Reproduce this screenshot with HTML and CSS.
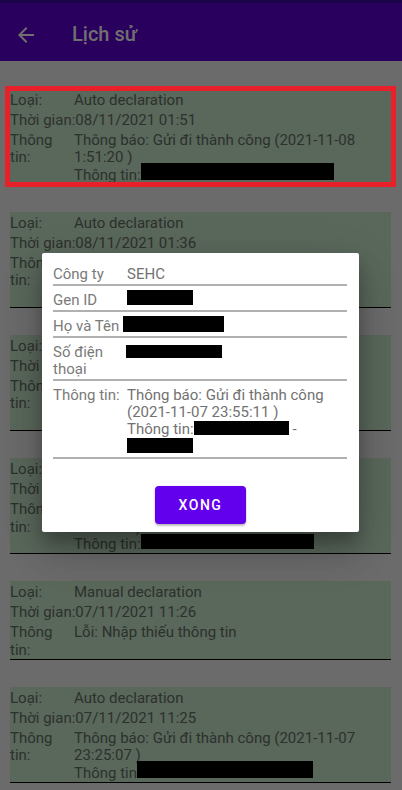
FILE: index.html
```html
<!DOCTYPE html>
<html lang="vi">
<head>
<meta charset="utf-8">
<title>Lịch sử</title>
<link rel="stylesheet" href="styles.css">
</head>
<body>
<header class="appbar">
  <div class="statusbar"></div>
  <div class="toolbar">
    <svg class="back" viewBox="0 0 24 24" width="24" height="24" aria-hidden="true">
      <path d="M20 11H7.83l5.59-5.59L12 4l-8 8 8 8 1.41-1.41L7.83 13H20v-2z" fill="currentColor"/>
    </svg>
    <h1 class="title">Lịch sử</h1>
  </div>
</header>

<main class="list">
  <section class="card">
    <div class="row"><span class="lbl">Loại:</span><span class="val">Auto declaration</span></div>
    <div class="row"><span class="lbl">Thời gian:</span><span class="val">08/11/2021 01:51</span></div>
    <div class="row"><span class="lbl wrap">Thông tin:</span><span class="val">Thông báo: Gửi đi thành công (2021-11-08<br>1:51:20 )<br>Thông tin:<span class="redact r-c1"></span></span></div>
    <div class="mark"></div>
  </section>

  <section class="card">
    <div class="row"><span class="lbl">Loại:</span><span class="val">Auto declaration</span></div>
    <div class="row"><span class="lbl">Thời gian:</span><span class="val">08/11/2021 01:36</span></div>
    <div class="row"><span class="lbl wrap">Thông tin:</span><span class="val">Thông báo: Gửi đi thành công (2021-11-08<br>1:36:40 )<br>Thông tin:<span class="redact r-c1"></span></span></div>
  </section>

  <section class="card">
    <div class="row"><span class="lbl">Loại:</span><span class="val">Auto declaration</span></div>
    <div class="row"><span class="lbl">Thời gian:</span><span class="val">08/11/2021 00:12</span></div>
    <div class="row"><span class="lbl wrap">Thông tin:</span><span class="val">Thông báo: Gửi đi thành công (2021-11-08<br>0:12:05 )<br>Thông tin:<span class="redact r-c1"></span></span></div>
  </section>

  <section class="card">
    <div class="row"><span class="lbl">Loại:</span><span class="val">Auto declaration</span></div>
    <div class="row"><span class="lbl">Thời gian:</span><span class="val">07/11/2021 23:55</span></div>
    <div class="row"><span class="lbl wrap">Thông tin:</span><span class="val">Thông báo: Gửi đi thành công (2021-11-07<br>23:55:11 )<br>Thông tin:<span class="redact r-c4"></span></span></div>
  </section>

  <section class="card">
    <div class="row"><span class="lbl">Loại:</span><span class="val">Manual declaration</span></div>
    <div class="row"><span class="lbl">Thời gian:</span><span class="val">07/11/2021 11:26</span></div>
    <div class="row"><span class="lbl wrap">Thông tin:</span><span class="val">Lỗi: Nhập thiếu thông tin</span></div>
  </section>

  <section class="card">
    <div class="row"><span class="lbl">Loại:</span><span class="val">Auto declaration</span></div>
    <div class="row"><span class="lbl">Thời gian:</span><span class="val">07/11/2021 11:25</span></div>
    <div class="row"><span class="lbl wrap">Thông tin:</span><span class="val">Thông báo: Gửi đi thành công (2021-11-07<br>23:25:07 )<br>Thông tin<span class="redact r-c6"></span></span></div>
  </section>
</main>

<div class="dialog" role="dialog">
  <div class="drow"><span class="dlbl">Công ty</span><span class="dval">SEHC</span></div>
  <div class="drow"><span class="dlbl">Gen ID</span><span class="dval"><span class="redact r-gen"></span></span></div>
  <div class="drow"><span class="dlbl">Họ và Tên</span><span class="dval"><span class="redact r-name"></span></span></div>
  <div class="drow"><span class="dlbl">Số điện thoại</span><span class="dval"><span class="redact r-phone"></span></span></div>
  <div class="drow"><span class="dlbl">Thông tin:</span><span class="dval">Thông báo: Gửi đi thành công<br>(2021-11-07 23:55:11 )<br>Thông tin:<span class="redact r-info1"></span> -<br><span class="redact r-info2"></span></span></div>
  <div class="actions"><button class="btn" type="button">XONG</button></div>
</div>
</body>
</html>
```

FILE: styles.css
```css
html, body {
  margin: 0;
  padding: 0;
}

body {
  width: 402px;
  height: 790px;
  overflow: hidden;
  background: #6b6b6b;
  font-family: Roboto, "Noto Sans", "Liberation Sans", sans-serif;
  color: #2c312c;
}

.appbar {
  display: flex;
  flex-direction: column;
}

.statusbar {
  height: 3px;
  background: #1b0548;
}

.toolbar {
  height: 58px;
  background: #2a005e;
  display: flex;
  align-items: center;
  color: #6f6f6f;
}

.back {
  margin-left: 14px;
  margin-top: 5px;
  flex: 0 0 24px;
}

.title {
  margin: 0 0 0 34px;
  font-size: 20px;
  font-weight: 500;
  line-height: 24px;
  padding-top: 4px;
  color: #707070;
}

.list {
  padding: 1px 11px 0 10px;
  display: flex;
  flex-direction: column;
}

.card {
  position: relative;
  margin-top: 27px;
  background: #5a675b;
  border-bottom: 1px solid #000;
  font-size: 15px;
  line-height: 17.4px;
}

.row {
  display: flex;
  padding-top: 2.7px;
}

.lbl {
  flex: 0 0 64px;
  white-space: nowrap;
}

.lbl.wrap {
  white-space: normal;
}

.val {
  flex: 1 1 auto;
  white-space: nowrap;
}

.redact {
  display: inline-block;
  background: #000;
  vertical-align: baseline;
}

.r-c1 { width: 193px; height: 16.7px; margin-top: -4px; }
.r-c4 { width: 173px; height: 15px; margin-top: -2px; }
.r-c6 { width: 176px; height: 17px; margin-top: -4px; }

.mark {
  position: absolute;
  top: -3px;
  bottom: -3px;
  left: -5px;
  right: -5px;
  border: 5px solid #e8202a;
}

/* dialog */
.dialog {
  position: absolute;
  top: 253px;
  left: 42px;
  width: 317px;
  box-sizing: border-box;
  padding: 7px 12px 8px 11px;
  background: #fff;
  border-radius: 2px;
  box-shadow: 0 11px 15px rgba(0, 0, 0, 0.2), 0 9px 46px rgba(0, 0, 0, 0.12), 0 24px 38px rgba(0, 0, 0, 0.14);
  font-size: 15px;
  line-height: 17px;
  color: #777;
}

.drow {
  display: flex;
  padding: 6px 0 1px;
  border-bottom: 2px solid #b0b0b0;
}

.dlbl {
  flex: 0 0 74px;
  color: #7a7a7a;
}

.dval {
  flex: 1 1 auto;
  white-space: nowrap;
  color: #727272;
}

.r-gen { width: 66px; height: 15px; margin-top: -2px; }
.r-name { width: 101px; height: 16px; margin-top: -3px; margin-left: -4px; margin-bottom: -1px; }
.r-phone { width: 96px; height: 13px; margin-left: -1px; margin-bottom: -1px; }
.r-info1 { width: 95px; height: 14px; margin-bottom: -1px; }
.r-info2 { width: 66px; height: 14.5px; margin-bottom: -1px; }

.actions {
  display: flex;
  justify-content: center;
  padding-top: 27px;
}

.btn {
  width: 91px;
  height: 38px;
  margin-left: 1px;
  border: 0;
  border-radius: 4px;
  background: #6200ee;
  color: #fff;
  font-family: Roboto, "Noto Sans", "Liberation Sans", sans-serif;
  font-size: 14px;
  font-weight: 500;
  letter-spacing: 1.5px;
  box-shadow: 0 2px 2px rgba(0, 0, 0, 0.24), 0 0 2px rgba(0, 0, 0, 0.12);
}
```
